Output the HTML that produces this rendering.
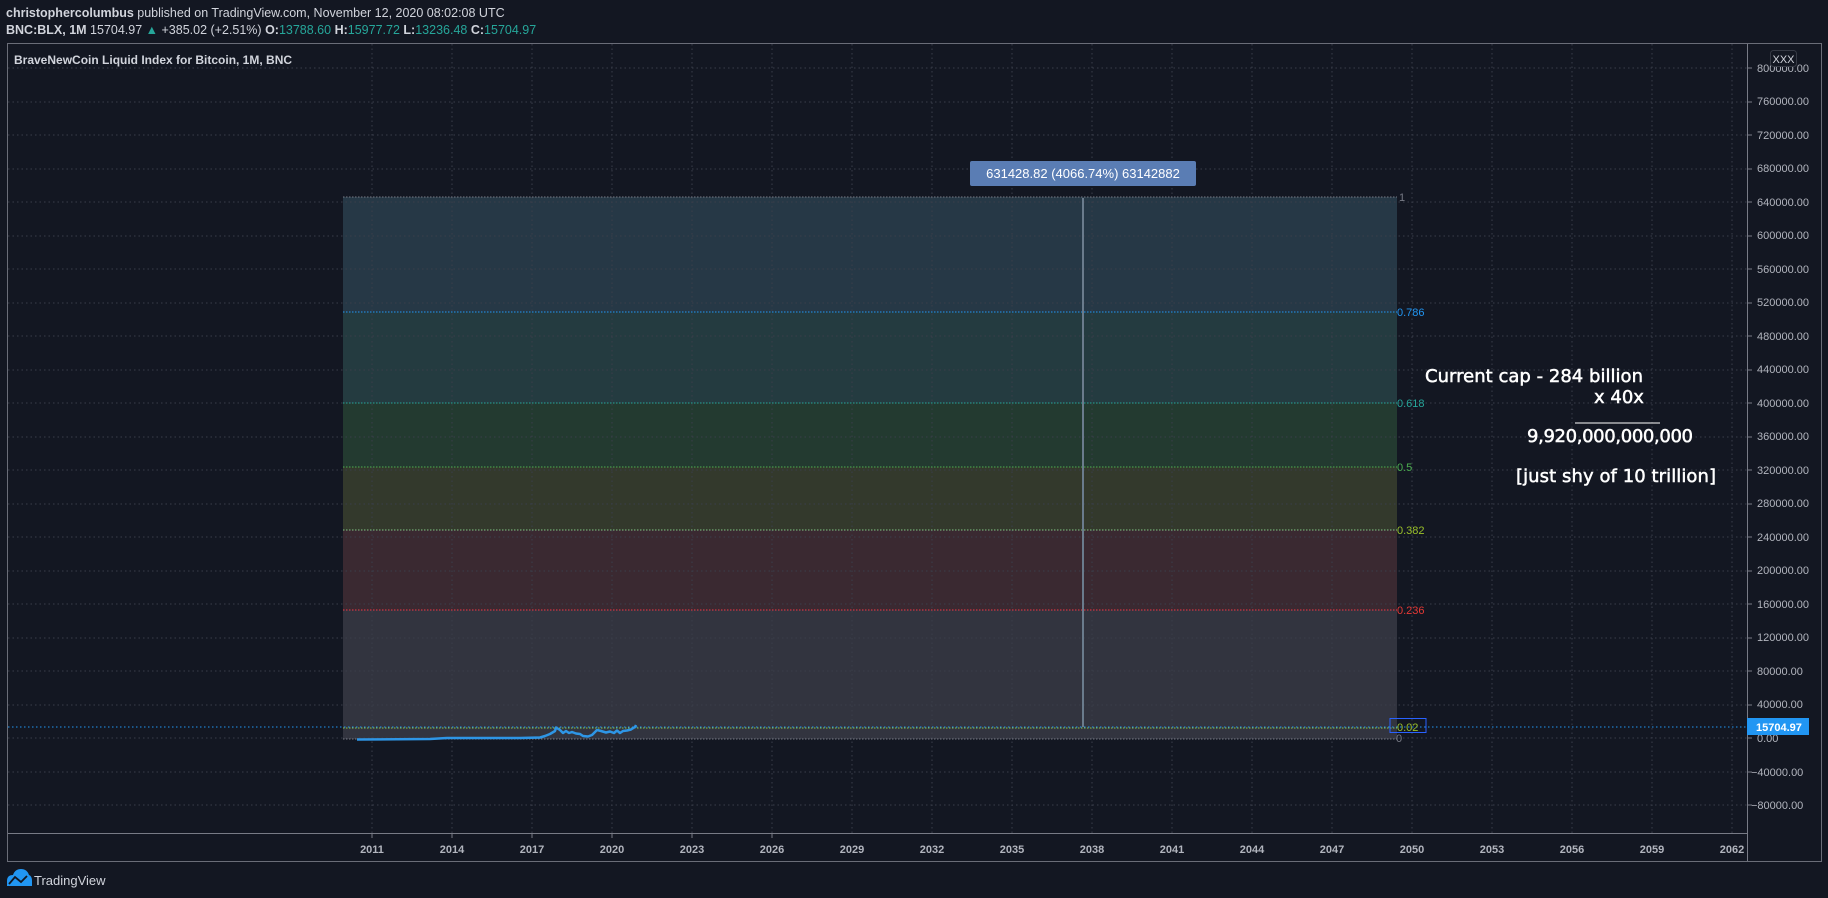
<!DOCTYPE html>
<html><head><meta charset="utf-8"><style>
html,body{margin:0;padding:0;background:#131722;width:1828px;height:898px;overflow:hidden;font-family:"Liberation Sans",sans-serif}
svg{display:block}
</style></head><body>
<svg width="1828" height="898" viewBox="0 0 1828 898" xmlns="http://www.w3.org/2000/svg" font-family="Liberation Sans, sans-serif">
<rect width="1828" height="898" fill="#131722"/>
<!-- header -->
<text x="6" y="17" font-size="12.5" fill="#d1d4dc"><tspan font-weight="bold">christophercolumbus</tspan> published on TradingView.com, November 12, 2020 08:02:08 UTC</text>
<text x="6" y="34" font-size="12.5" fill="#d1d4dc"><tspan font-weight="bold">BNC:BLX, 1M</tspan> 15704.97 <tspan fill="#26a69a">▲</tspan> +385.02 (+2.51%) <tspan font-weight="bold">O:</tspan><tspan fill="#26a69a">13788.60</tspan> <tspan font-weight="bold">H:</tspan><tspan fill="#26a69a">15977.72</tspan> <tspan font-weight="bold">L:</tspan><tspan fill="#26a69a">13236.48</tspan> <tspan font-weight="bold">C:</tspan><tspan fill="#26a69a">15704.97</tspan></text>
<text x="14" y="64" font-size="12" font-weight="bold" fill="#d1d4dc">BraveNewCoin Liquid Index for Bitcoin, 1M, BNC</text>
<!-- fib bands -->
<rect x="343" y="197" width="1054" height="115" fill="#263846"/>
<rect x="343" y="312" width="1054" height="91" fill="#243b40"/>
<rect x="343" y="403" width="1054" height="64" fill="#233a30"/>
<rect x="343" y="467" width="1054" height="63" fill="#33392c"/>
<rect x="343" y="530" width="1054" height="80" fill="#3a2931"/>
<rect x="343" y="610" width="1054" height="129" fill="#32343f"/>
<!-- grid -->
<g stroke="#3a3e4a" stroke-width="1" stroke-dasharray="1.5,3">
<line x1="8" y1="68" x2="1747" y2="68"/><line x1="8" y1="102" x2="1747" y2="102"/><line x1="8" y1="135" x2="1747" y2="135"/><line x1="8" y1="169" x2="1747" y2="169"/><line x1="8" y1="202" x2="1747" y2="202"/><line x1="8" y1="236" x2="1747" y2="236"/><line x1="8" y1="269" x2="1747" y2="269"/><line x1="8" y1="303" x2="1747" y2="303"/><line x1="8" y1="336" x2="1747" y2="336"/><line x1="8" y1="370" x2="1747" y2="370"/><line x1="8" y1="403" x2="1747" y2="403"/><line x1="8" y1="437" x2="1747" y2="437"/><line x1="8" y1="470" x2="1747" y2="470"/><line x1="8" y1="504" x2="1747" y2="504"/><line x1="8" y1="537" x2="1747" y2="537"/><line x1="8" y1="571" x2="1747" y2="571"/><line x1="8" y1="604" x2="1747" y2="604"/><line x1="8" y1="638" x2="1747" y2="638"/><line x1="8" y1="671" x2="1747" y2="671"/><line x1="8" y1="705" x2="1747" y2="705"/><line x1="8" y1="738" x2="1747" y2="738"/><line x1="8" y1="772" x2="1747" y2="772"/><line x1="8" y1="805" x2="1747" y2="805"/>
<line x1="372" y1="44" x2="372" y2="833"/><line x1="452" y1="44" x2="452" y2="833"/><line x1="532" y1="44" x2="532" y2="833"/><line x1="612" y1="44" x2="612" y2="833"/><line x1="692" y1="44" x2="692" y2="833"/><line x1="772" y1="44" x2="772" y2="833"/><line x1="852" y1="44" x2="852" y2="833"/><line x1="932" y1="44" x2="932" y2="833"/><line x1="1012" y1="44" x2="1012" y2="833"/><line x1="1092" y1="44" x2="1092" y2="833"/><line x1="1172" y1="44" x2="1172" y2="833"/><line x1="1252" y1="44" x2="1252" y2="833"/><line x1="1332" y1="44" x2="1332" y2="833"/><line x1="1412" y1="44" x2="1412" y2="833"/><line x1="1492" y1="44" x2="1492" y2="833"/><line x1="1572" y1="44" x2="1572" y2="833"/><line x1="1652" y1="44" x2="1652" y2="833"/><line x1="1732" y1="44" x2="1732" y2="833"/>
</g>
<!-- fib lines -->
<g stroke-width="1" stroke-dasharray="1.5,1.5">
<line x1="343" y1="197" x2="1397" y2="197" stroke="#787b86"/>
<line x1="343" y1="312" x2="1397" y2="312" stroke="#2196f3"/>
<line x1="343" y1="403" x2="1397" y2="403" stroke="#26a69a"/>
<line x1="343" y1="467" x2="1397" y2="467" stroke="#4caf50"/>
<line x1="343" y1="530" x2="1397" y2="530" stroke="#81c784"/>
<line x1="343" y1="610" x2="1397" y2="610" stroke="#f23645"/>
<line x1="343" y1="728" x2="1397" y2="728" stroke="#8bc34a"/>
<line x1="343" y1="739" x2="1397" y2="739" stroke="#787b86"/>
</g>
<line x1="8" y1="727" x2="1747" y2="727" stroke="#2196f3" stroke-dasharray="1.5,2.5"/>
<g font-size="11">
<text x="1399" y="201" fill="#787b86">1</text>
<text x="1397" y="316" fill="#2196f3">0.786</text>
<text x="1397" y="407" fill="#26a69a">0.618</text>
<text x="1397" y="471" fill="#4caf50">0.5</text>
<text x="1397" y="534" fill="#9bc12a">0.382</text>
<text x="1397" y="614" fill="#e53935">0.236</text>
<text x="1397" y="731" fill="#9bc12a">0.02</text>
<text x="1396" y="742" fill="#787b86">0</text>
</g>
<rect x="1390" y="718.5" width="36" height="14" fill="none" stroke="#2962ff" stroke-width="1"/>
<!-- vertical measure -->
<line x1="1083" y1="198" x2="1083" y2="727" stroke="#6a7b8c" stroke-width="2"/>
<rect x="970" y="161" width="226" height="25" rx="2" fill="#5a7db4"/>
<text x="1083" y="178" font-size="13" fill="#fff" text-anchor="middle">631428.82 (4066.74%) 63142882</text>
<!-- price line -->
<polyline fill="none" stroke="#2e96e6" stroke-width="2.5" stroke-linejoin="round" points="357,739.5 430,739 447,738 520,738 540,737.5 545,736 550,734 555,731 556,727.5 560,730 563,733 566,731 569,733 572,732 576,733.5 580,734 583,736 588,736.5 592,735 595,732 597,730 601,731 606,732.5 610,731.5 614,733 617,730.5 620,733 623,731 627,730.5 631,729.5 635,727 636,725"/>
<!-- annotation -->
<g fill="#fff" stroke="#fff" stroke-width="0.5" font-family="DejaVu Sans, sans-serif" font-size="18">
<text x="1425" y="382" textLength="218">Current cap - 284 billion</text>
<text x="1594" y="403">x 40x</text>
<text x="1527" y="442" textLength="166">9,920,000,000,000</text>
<text x="1516" y="482" textLength="200">[just shy of 10 trillion]</text>
</g>
<line x1="1575" y1="423" x2="1660" y2="423" stroke="#fff" stroke-width="1"/>
<!-- frame -->
<rect x="7.5" y="43.5" width="1814" height="818" fill="none" stroke="#6a6d78" stroke-width="1"/>
<line x1="1747.5" y1="44" x2="1747.5" y2="861" stroke="#787b86"/>
<line x1="8" y1="833.5" x2="1747" y2="833.5" stroke="#787b86"/>
<!-- price axis -->
<g font-size="11" fill="#b2b5be">
<text x="1757" y="72">800000.00</text><text x="1757" y="105">760000.00</text><text x="1757" y="139">720000.00</text><text x="1757" y="172">680000.00</text><text x="1757" y="206">640000.00</text><text x="1757" y="239">600000.00</text><text x="1757" y="273">560000.00</text><text x="1757" y="306">520000.00</text><text x="1757" y="340">480000.00</text><text x="1757" y="373">440000.00</text><text x="1757" y="407">400000.00</text><text x="1757" y="440">360000.00</text><text x="1757" y="474">320000.00</text><text x="1757" y="507">280000.00</text><text x="1757" y="541">240000.00</text><text x="1757" y="574">200000.00</text><text x="1757" y="608">160000.00</text><text x="1757" y="641">120000.00</text><text x="1757" y="675">80000.00</text><text x="1757" y="708">40000.00</text><text x="1757" y="742">0.00</text><text x="1751" y="776">−40000.00</text><text x="1751" y="809">−80000.00</text>
</g>
<g stroke="#787b86"><line x1="1748" y1="68" x2="1752" y2="68"/><line x1="1748" y1="102" x2="1752" y2="102"/><line x1="1748" y1="135" x2="1752" y2="135"/><line x1="1748" y1="169" x2="1752" y2="169"/><line x1="1748" y1="202" x2="1752" y2="202"/><line x1="1748" y1="236" x2="1752" y2="236"/><line x1="1748" y1="269" x2="1752" y2="269"/><line x1="1748" y1="303" x2="1752" y2="303"/><line x1="1748" y1="336" x2="1752" y2="336"/><line x1="1748" y1="370" x2="1752" y2="370"/><line x1="1748" y1="403" x2="1752" y2="403"/><line x1="1748" y1="437" x2="1752" y2="437"/><line x1="1748" y1="470" x2="1752" y2="470"/><line x1="1748" y1="504" x2="1752" y2="504"/><line x1="1748" y1="537" x2="1752" y2="537"/><line x1="1748" y1="571" x2="1752" y2="571"/><line x1="1748" y1="604" x2="1752" y2="604"/><line x1="1748" y1="638" x2="1752" y2="638"/><line x1="1748" y1="671" x2="1752" y2="671"/><line x1="1748" y1="705" x2="1752" y2="705"/><line x1="1748" y1="738" x2="1752" y2="738"/><line x1="1748" y1="772" x2="1752" y2="772"/><line x1="1748" y1="805" x2="1752" y2="805"/></g>
<rect x="1747" y="718" width="62" height="17" fill="#2196f3"/>
<text x="1756" y="731" font-size="11" font-weight="bold" fill="#fff">15704.97</text>
<rect x="1770.5" y="50.5" width="26" height="16" rx="3" fill="#131722" stroke="#363a45"/>
<text x="1783.5" y="63" font-size="11" fill="#d1d4dc" text-anchor="middle">XXX</text>
<!-- time axis -->
<g font-size="11" font-weight="bold" fill="#b2b5be" text-anchor="middle">
<text x="372" y="853">2011</text><text x="452" y="853">2014</text><text x="532" y="853">2017</text><text x="612" y="853">2020</text><text x="692" y="853">2023</text><text x="772" y="853">2026</text><text x="852" y="853">2029</text><text x="932" y="853">2032</text><text x="1012" y="853">2035</text><text x="1092" y="853">2038</text><text x="1172" y="853">2041</text><text x="1252" y="853">2044</text><text x="1332" y="853">2047</text><text x="1412" y="853">2050</text><text x="1492" y="853">2053</text><text x="1572" y="853">2056</text><text x="1652" y="853">2059</text><text x="1732" y="853">2062</text>
</g>
<g stroke="#787b86"><line x1="372" y1="834" x2="372" y2="838"/><line x1="452" y1="834" x2="452" y2="838"/><line x1="532" y1="834" x2="532" y2="838"/><line x1="612" y1="834" x2="612" y2="838"/><line x1="692" y1="834" x2="692" y2="838"/><line x1="772" y1="834" x2="772" y2="838"/></g>
<!-- logo -->
<path d="M7,886 L7,881 Q7,875 13,875 Q15,869 21,869 Q27,869 29,875 Q32,876 32,881 L32,886 Z" fill="#2196f3"/>
<polyline points="9,884 15,877 21,882 27,876" fill="none" stroke="#131722" stroke-width="1.8"/>
<text x="34" y="885" font-size="13" fill="#d1d4dc">TradingView</text>
</svg>
</body></html>
